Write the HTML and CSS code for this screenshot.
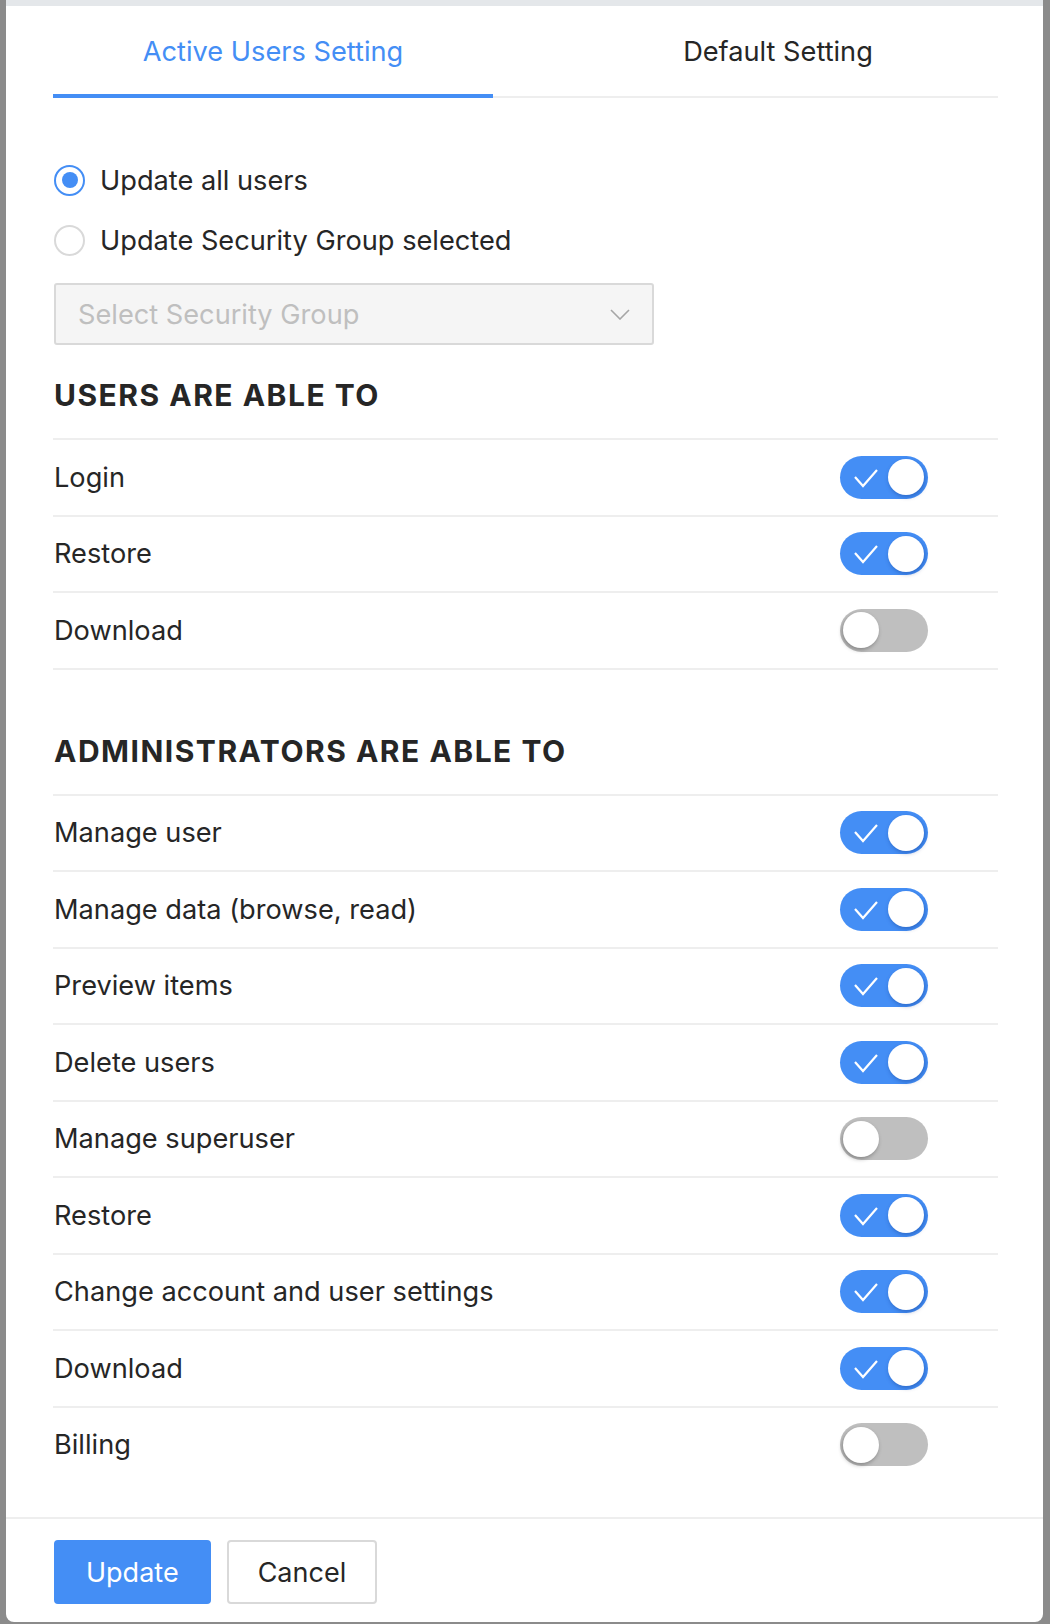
FILE: index.html
```html
<!DOCTYPE html>
<html lang="en">
<head>
    <meta charset="UTF-8">
    <meta name="viewport" content="width=device-width, initial-scale=1.0">
    <title>User Permissions</title>
    <link rel="stylesheet" href="styles.css">
</head>
<body>
    <div class="modal">
        <div class="tabs">
            <div class="tab active">Active Users Setting</div>
            <div class="tab">Default Setting</div>
        </div>

        <div class="modal-body">
            <div class="radio-group">
                <label class="radio">
                    <input type="radio" name="scope" checked>
                    <span class="radio-mark"></span>
                    Update all users
                </label>
                <label class="radio">
                    <input type="radio" name="scope">
                    <span class="radio-mark"></span>
                    Update Security Group selected
                </label>
            </div>

            <div class="select disabled">
                <span class="placeholder">Select Security Group</span>
                <svg class="chevron" width="20" height="11" viewBox="0 0 20 11">
                    <polyline points="1,1 10,10 19,1" fill="none" stroke="#a6a6a6" stroke-width="1.6"/>
                </svg>
            </div>

            <h2 class="section-title">USERS ARE ABLE TO</h2>
            <div class="permission-list bordered">
                <div class="permission-row">
                    <span>Login</span>
                    <label class="switch"><input type="checkbox" checked><span class="slider"><svg class="check" viewBox="0 0 88 43"><polyline points="15,21 23,30 37,14"/></svg></span></label>
                </div>
                <div class="permission-row">
                    <span>Restore</span>
                    <label class="switch"><input type="checkbox" checked><span class="slider"><svg class="check" viewBox="0 0 88 43"><polyline points="15,21 23,30 37,14"/></svg></span></label>
                </div>
                <div class="permission-row">
                    <span>Download</span>
                    <label class="switch"><input type="checkbox"><span class="slider"><svg class="check" viewBox="0 0 88 43"><polyline points="15,21 23,30 37,14"/></svg></span></label>
                </div>
            </div>

            <h2 class="section-title admin">ADMINISTRATORS ARE ABLE TO</h2>
            <div class="permission-list">
                <div class="permission-row">
                    <span>Manage user</span>
                    <label class="switch"><input type="checkbox" checked><span class="slider"><svg class="check" viewBox="0 0 88 43"><polyline points="15,21 23,30 37,14"/></svg></span></label>
                </div>
                <div class="permission-row">
                    <span>Manage data (browse, read)</span>
                    <label class="switch"><input type="checkbox" checked><span class="slider"><svg class="check" viewBox="0 0 88 43"><polyline points="15,21 23,30 37,14"/></svg></span></label>
                </div>
                <div class="permission-row">
                    <span>Preview items</span>
                    <label class="switch"><input type="checkbox" checked><span class="slider"><svg class="check" viewBox="0 0 88 43"><polyline points="15,21 23,30 37,14"/></svg></span></label>
                </div>
                <div class="permission-row">
                    <span>Delete users</span>
                    <label class="switch"><input type="checkbox" checked><span class="slider"><svg class="check" viewBox="0 0 88 43"><polyline points="15,21 23,30 37,14"/></svg></span></label>
                </div>
                <div class="permission-row">
                    <span>Manage superuser</span>
                    <label class="switch"><input type="checkbox"><span class="slider"><svg class="check" viewBox="0 0 88 43"><polyline points="15,21 23,30 37,14"/></svg></span></label>
                </div>
                <div class="permission-row">
                    <span>Restore</span>
                    <label class="switch"><input type="checkbox" checked><span class="slider"><svg class="check" viewBox="0 0 88 43"><polyline points="15,21 23,30 37,14"/></svg></span></label>
                </div>
                <div class="permission-row">
                    <span>Change account and user settings</span>
                    <label class="switch"><input type="checkbox" checked><span class="slider"><svg class="check" viewBox="0 0 88 43"><polyline points="15,21 23,30 37,14"/></svg></span></label>
                </div>
                <div class="permission-row">
                    <span>Download</span>
                    <label class="switch"><input type="checkbox" checked><span class="slider"><svg class="check" viewBox="0 0 88 43"><polyline points="15,21 23,30 37,14"/></svg></span></label>
                </div>
                <div class="permission-row">
                    <span>Billing</span>
                    <label class="switch"><input type="checkbox"><span class="slider"><svg class="check" viewBox="0 0 88 43"><polyline points="15,21 23,30 37,14"/></svg></span></label>
                </div>
            </div>
        </div>

        <div class="modal-footer">
            <button class="btn btn-primary">Update</button>
            <button class="btn">Cancel</button>
        </div>
    </div>
</body>
</html>
```

FILE: styles.css
```css
html, body {
    margin: 0;
    height: 1624px;
}

body {
    background-color: #8b8b8b;
    font-family: Inter, "Noto Sans", sans-serif;
    font-size: 27.2px;
    color: #262626;
}

.modal {
    margin: 0 7px 0 6px;
    background-color: #fff;
    border-top: 6px solid #e4e7ea;
    border-radius: 0 0 8px 8px;
}

/* Tabs */
.tabs {
    display: grid;
    grid-template-columns: 1fr 1fr;
    column-gap: 65px;
    margin: 0 45px 0 47px;
    border-bottom: 2px solid #eeeeee;
}

.tab {
    padding: 26px 0 22px;
    line-height: 40px;
    text-align: center;
    border-bottom: 4px solid transparent;
    margin-bottom: -2px;
}

.tab.active {
    color: #448ef5;
    border-bottom-color: #448ef5;
}

/* Body */
.modal-body {
    padding: 0 45px 35px 47px;
}

.radio-group {
    display: flex;
    flex-direction: column;
    gap: 16px;
    margin-top: 60px;
}

.radio {
    display: flex;
    align-items: center;
    height: 44px;
    gap: 15px;
}

.radio input {
    display: none;
}

.radio-mark {
    box-sizing: border-box;
    width: 31px;
    height: 31px;
    margin-left: 1px;
    border: 2px solid #d9d9d9;
    border-radius: 50%;
    display: flex;
    align-items: center;
    justify-content: center;
}

.radio input:checked + .radio-mark {
    border-color: #448ef5;
}

.radio input:checked + .radio-mark::after {
    content: "";
    width: 16px;
    height: 16px;
    border-radius: 50%;
    background-color: #448ef5;
}

.select {
    box-sizing: border-box;
    width: 600px;
    height: 62px;
    margin: 21px 0 0 1px;
    padding: 0 22px 0 22px;
    display: flex;
    align-items: center;
    justify-content: space-between;
    background-color: #f5f5f5;
    border: 2px solid #d9d9d9;
    border-radius: 3px;
}

.select .placeholder {
    color: #bfbfbf;
}

.section-title {
    margin: 28px 0 21px 1px;
    font-size: 30px;
    font-weight: 700;
    letter-spacing: 1.5px;
    line-height: 44px;
    color: #262626;
}

.section-title.admin {
    margin-top: 59px;
}

.permission-list.bordered {
    border-bottom: 2px solid #eeeeee;
}

.permission-row {
    box-sizing: border-box;
    height: 76.5px;
    border-top: 2px solid #eeeeee;
    display: flex;
    align-items: center;
    justify-content: space-between;
    padding: 0 70px 0 1px;
}

/* Switch */
.switch {
    position: relative;
    width: 88px;
    height: 43px;
}

.switch input {
    display: none;
}

.slider {
    position: absolute;
    inset: 0;
    border-radius: 22px;
    background-color: #bfbfbf;
}

.slider::before {
    content: "";
    position: absolute;
    top: 3.5px;
    left: 3px;
    width: 36px;
    height: 36px;
    border-radius: 50%;
    background-color: #fff;
    box-shadow: -1px 2px 4px rgba(0,0,0,0.3);
}

.check {
    position: absolute;
    inset: 0;
    width: 88px;
    height: 43px;
    fill: none;
    stroke: #fff;
    stroke-width: 2.2;
    display: none;
}

.switch input:checked + .slider {
    background-color: #448ef5;
}

.switch input:checked + .slider::before {
    left: auto;
    right: 4px;
    box-shadow: 1px 2px 4px rgba(0,40,120,0.35);
}

.switch input:checked + .slider .check {
    display: block;
}

/* Footer */
.modal-footer {
    display: flex;
    gap: 16px;
    padding: 21px 45px 18px 47px;
    border-top: 2px solid #eeeeee;
}

.btn {
    box-sizing: border-box;
    height: 64px;
    padding: 0 29px;
    font-family: inherit;
    font-size: 27px;
    color: #262626;
    background-color: #fff;
    border: 2px solid #d9d9d9;
    border-radius: 4px;
    cursor: pointer;
}

.btn-primary {
    margin-left: 1px;
    padding: 0 30px;
    color: #fff;
    background-color: #448ef5;
    border-color: #448ef5;
}
```
